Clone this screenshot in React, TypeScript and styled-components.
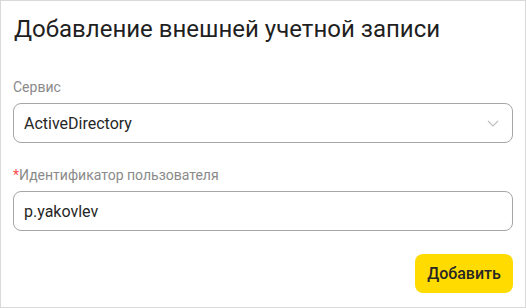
import React from "react";
import styled, { createGlobalStyle } from "styled-components";

const Global = createGlobalStyle`
  html, body { margin: 0; padding: 0; background: #fff; }
  body { font-family: Roboto, "Noto Sans", sans-serif; }
  * { box-sizing: border-box; }
`;

const Frame = styled.div`
  width: 526px;
  height: 308px;
  border: 1px solid #d9d9d9;
  padding: 14px 12px 0 12px;
  display: flex;
  flex-direction: column;
`;

const Title = styled.h1`
  margin: 0 0 0 1px;
  font-size: 24px;
  line-height: 28px;
  font-weight: 400;
  color: #1f1f1f;
`;

const Field = styled.div<{ $top: number }>`
  display: flex;
  flex-direction: column;
  margin-top: ${(p) => p.$top}px;
`;

const Label = styled.label`
  font-size: 14px;
  line-height: 20px;
  color: #8a8a8a;
  margin-bottom: 6px;
`;

const Star = styled.span`
  color: #ff4d4f;
`;

const Box = styled.div`
  height: 40px;
  border: 1px solid #a6a6a6;
  border-radius: 8px;
  display: flex;
  align-items: center;
  padding: 0 10px;
  font-size: 16px;
  color: #262626;
`;

const Value = styled.span`
  flex: 1;
`;

const Chevron = styled.svg`
  width: 14px;
  height: 14px;
  margin-right: 2px;
`;

const Footer = styled.div`
  display: flex;
  justify-content: flex-end;
  margin-top: 23px;
`;

const Button = styled.button`
  height: 39px;
  width: 98px;
  border: none;
  border-radius: 8px;
  background: #ffdb00;
  font-family: Roboto, sans-serif;
  font-size: 16px;
  font-weight: 500;
  color: #262626;
  cursor: pointer;
`;

export default function App() {
  return (
    <>
      <Global />
      <Frame>
        <Title>Добавление внешней учетной записи</Title>
        <Field $top={34}>
          <Label>Сервис</Label>
          <Box>
            <Value>ActiveDirectory</Value>
            <Chevron viewBox="0 0 14 14" fill="none">
              <path d="M2 5l5 5 5-5" stroke="#bfbfbf" strokeWidth="1.2" />
            </Chevron>
          </Box>
        </Field>
        <Field $top={22}>
          <Label>
            <Star>*</Star>Идентификатор пользователя
          </Label>
          <Box>
            <Value>p.yakovlev</Value>
          </Box>
        </Field>
        <Footer>
          <Button>Добавить</Button>
        </Footer>
      </Frame>
    </>
  );
}
